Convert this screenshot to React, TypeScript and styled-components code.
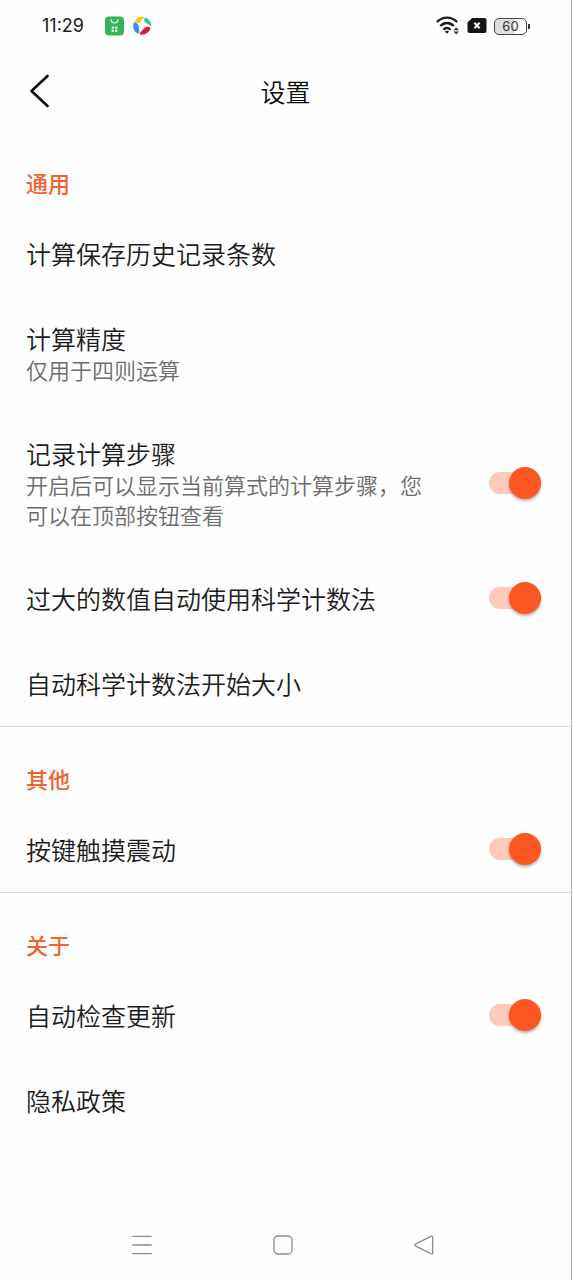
import React, { useId, useState } from "react";
import styled, { createGlobalStyle } from "styled-components";

const GlobalStyle = createGlobalStyle`
  *, *::before, *::after { box-sizing: border-box; }
  body {
    margin: 0;
    background: #fefefe;
    color: #1c1c1c;
    font-family: "Noto Sans CJK SC", sans-serif;
  }
`;

const Screen = styled.div`
  display: flex;
  flex-direction: column;
  min-height: 100vh;
  border-right: 1px solid #b4b4b4;
`;

const StatusBar = styled.div`
  display: flex;
  align-items: center;
  justify-content: space-between;
  height: 50px;
  padding: 2px 41px 0 42px;
`;

const StatusGroup = styled.div<{ $gap: number }>`
  display: flex;
  align-items: center;
  gap: ${(p) => p.$gap}px;
`;

const Clock = styled.span`
  width: 55px;
  font: 400 18px/24px Inter, sans-serif;
  color: #1a1a1a;
`;

const Header = styled.header`
  display: grid;
  grid-template-columns: 60px 1fr 60px;
  align-items: center;
  height: 81px;
  padding: 0 10px;
`;

const PlainButton = styled.button`
  display: flex;
  align-items: center;
  justify-content: center;
  height: 48px;
  padding: 0;
  border: 0;
  background: none;
  color: inherit;
  cursor: pointer;
`;

const PageTitle = styled.h1`
  margin: 0;
  font-size: 25px;
  font-weight: 350;
  line-height: 32px;
  text-align: center;
  color: #0c0c0c;
`;

const Group = styled.section`
  & + & {
    border-top: 1px solid #dedede;
  }
`;

const GroupTitle = styled.h2`
  margin: 0;
  padding: 36px 26px 14px;
  font-size: 22px;
  font-weight: 500;
  line-height: 30px;
  color: #f0632f;
`;

const Row = styled.div`
  display: flex;
  align-items: center;
  justify-content: space-between;
  gap: 56px;
  width: 100%;
  padding: 26px 30px 27px 26px;
`;

const RowButton = styled(Row).attrs({ as: "button" })`
  border: 0;
  background: none;
  color: inherit;
  font: inherit;
  text-align: left;
  cursor: pointer;
`;

const RowText = styled.span`
  display: flex;
  flex-direction: column;
  min-width: 0;
`;

const RowLabel = styled.label`
  font-size: 25px;
  font-weight: 350;
  line-height: 32px;
`;

const RowName = styled(RowLabel).attrs({ as: "span" })``;

const RowNote = styled.span`
  font-size: 22px;
  font-weight: 350;
  line-height: 30px;
  color: #6c6c6c;
`;

const Switch = styled.input`
  appearance: none;
  flex: none;
  display: flex;
  align-items: center;
  width: 52px;
  height: 22px;
  margin: 0;
  border-radius: 11px;
  background: #d0d0d0;
  cursor: pointer;

  &::before {
    content: "";
    width: 32px;
    height: 32px;
    border-radius: 50%;
    background: #f4f4f4;
    box-shadow: 0 2px 3px rgba(0, 0, 0, 0.3);
  }

  &:checked {
    justify-content: flex-end;
    background: #ffcaba;
  }

  &:checked::before {
    background: #fc5722;
  }
`;

const NavBar = styled.nav`
  display: grid;
  grid-template-columns: repeat(3, 1fr);
  margin-top: auto;
  padding: 0 77px 11px 72px;
`;

function LinkRow({ name, note }: { name: string; note?: string }) {
  return (
    <RowButton>
      <RowText>
        <RowName>{name}</RowName>
        {note && <RowNote>{note}</RowNote>}
      </RowText>
    </RowButton>
  );
}

function SwitchRow({ name, note }: { name: string; note?: string }) {
  const id = useId();
  const [on, setOn] = useState(true);
  return (
    <Row>
      <RowText>
        <RowLabel htmlFor={id}>{name}</RowLabel>
        {note && <RowNote>{note}</RowNote>}
      </RowText>
      <Switch
        id={id}
        type="checkbox"
        role="switch"
        checked={on}
        onChange={(e) => setOn(e.target.checked)}
      />
    </Row>
  );
}

const StoreIcon = () => (
  <svg width="19" height="20" viewBox="0 0 19 20" aria-hidden="true">
    <rect x="0" y="0.5" width="19" height="19" rx="4" fill="#35b558" />
    <path d="M6 3.6a3.5 3.4 0 0 0 7 0" fill="none" stroke="#e9fbe9" strokeWidth="1.2" strokeLinecap="round" />
    <g fill="#d8f5dc">
      <rect x="6.6" y="10.4" width="2.4" height="2.3" rx="0.4" />
      <rect x="10" y="10.4" width="2.4" height="2.3" rx="0.4" />
      <rect x="6.6" y="13.6" width="2.4" height="2.3" rx="0.4" />
      <rect x="10" y="13.6" width="2.4" height="2.3" rx="0.4" />
    </g>
  </svg>
);

const PinwheelIcon = () => (
  <svg width="20" height="20" viewBox="0 0 20 20" aria-hidden="true">
    <path d="M3 4.6C5 1.4 8.8.2 12.4 1.1L7.8 6.2C6.2 7.8 3 7.2 3 4.6Z" fill="#ffc61a" />
    <path d="M13.2 1.4C17 2.8 19.4 6.2 19 10.2L13.6 6.6C11.8 5.2 11.6 2.6 13.2 1.4Z" fill="#35c98c" />
    <path d="M18.4 12C17.2 16.2 13.4 19 8.8 18.7 7.6 18.4 7.4 17.4 8.2 16.4L12.6 12C14.4 10.4 17.2 10 18.4 12Z" fill="#e5173f" />
    <path d="M2.2 6C.2 9.6 1 14.4 4.8 17.2 6.4 18 7.8 17 7.4 15.2L6.8 10.6C6.2 8 4.4 6.2 2.2 6Z" fill="#3d8ff0" />
  </svg>
);

const WifiIcon = () => (
  <svg width="24" height="22" viewBox="0 0 24 22" aria-hidden="true">
    <g fill="none" stroke="#1c1c1c" strokeWidth="2.3">
      <path d="M0.8 7C6.8 1.2 15.2 1.2 21.2 7" />
      <path d="M4.2 11C8.2 7 13.8 7 17.8 11" />
      <path d="M7.4 14.8C9.6 12.6 12.4 12.6 14.6 14.8" />
    </g>
    <path d="M8.8 16.6q2.2-1.6 4.4 0L11 18.8Z" fill="#1c1c1c" />
    <path d="M20.2 12.2l2.7 3h-5.4ZM20.2 19.6l2.7-3h-5.4Z" fill="#333" />
  </svg>
);

const SimIcon = () => (
  <svg width="20" height="18" viewBox="0 0 20 18" aria-hidden="true">
    <path d="M5 1H17.5a2 2 0 0 1 2 2V14a2 2 0 0 1-2 2H2.5a2 2 0 0 1-2-2V5.5Z" fill="#151515" />
    <path d="M7.4 5.8l5.2 5.4M12.6 5.8L7.4 11.2" stroke="#fff" strokeWidth="2" />
  </svg>
);

const Battery = styled.div`
  display: flex;
  align-items: center;
  gap: 1px;

  &::after {
    content: "";
    width: 2px;
    height: 5px;
    border-radius: 0 1px 1px 0;
    background: #333;
  }
`;

const BatteryBody = styled.span`
  width: 33px;
  height: 17px;
  border: 1px solid #444;
  border-radius: 5px;
  background: linear-gradient(90deg, #dedede 60%, #fefefe 60%);
  font: 400 13px/15px Inter, sans-serif;
  text-align: center;
  color: #333;
`;

export default function App() {
  return (
    <>
      <GlobalStyle />
      <Screen>
        <StatusBar>
          <StatusGroup $gap={8}>
            <Clock>11:29</Clock>
            <StoreIcon />
            <PinwheelIcon />
          </StatusGroup>
          <StatusGroup $gap={7}>
            <WifiIcon />
            <SimIcon />
            <Battery>
              <BatteryBody>60</BatteryBody>
            </Battery>
          </StatusGroup>
        </StatusBar>

        <Header>
          <PlainButton aria-label="返回">
            <svg width="22" height="34" viewBox="0 0 22 34" fill="none" stroke="#0c0c0c" strokeWidth="2.6" strokeLinecap="round" strokeLinejoin="round">
              <path d="M18.5 2L2.5 17L18.5 32" />
            </svg>
          </PlainButton>
          <PageTitle>设置</PageTitle>
        </Header>

        <main>
          <Group>
            <GroupTitle>通用</GroupTitle>
            <LinkRow name="计算保存历史记录条数" />
            <LinkRow name="计算精度" note="仅用于四则运算" />
            <SwitchRow name="记录计算步骤" note="开启后可以显示当前算式的计算步骤，您可以在顶部按钮查看" />
            <SwitchRow name="过大的数值自动使用科学计数法" />
            <LinkRow name="自动科学计数法开始大小" />
          </Group>
          <Group>
            <GroupTitle>其他</GroupTitle>
            <SwitchRow name="按键触摸震动" />
          </Group>
          <Group>
            <GroupTitle>关于</GroupTitle>
            <SwitchRow name="自动检查更新" />
            <LinkRow name="隐私政策" />
          </Group>
        </main>

        <NavBar>
          <PlainButton aria-label="最近任务">
            <svg width="20" height="20" viewBox="0 0 20 20" stroke="#8c8c8c" strokeWidth="1.3" strokeLinecap="round">
              <path d="M.8 1.3H19.2M.8 10H19.2M.8 18.7H19.2" />
            </svg>
          </PlainButton>
          <PlainButton aria-label="主屏幕">
            <svg width="20" height="20" viewBox="0 0 20 20" fill="none" stroke="#8c8c8c" strokeWidth="1.3">
              <rect x="1" y="1" width="18" height="18" rx="4" />
            </svg>
          </PlainButton>
          <PlainButton aria-label="后退">
            <svg width="20" height="20" viewBox="0 0 20 20" fill="none" stroke="#8c8c8c" strokeWidth="1.3" strokeLinejoin="round">
              <path d="M1.4 9.2L16.8 1.3Q18.7.6 18.7 2.4V17.6Q18.7 19.4 16.8 18.6L1.4 10.8Q.2 10 1.4 9.2Z" />
            </svg>
          </PlainButton>
        </NavBar>
      </Screen>
    </>
  );
}
